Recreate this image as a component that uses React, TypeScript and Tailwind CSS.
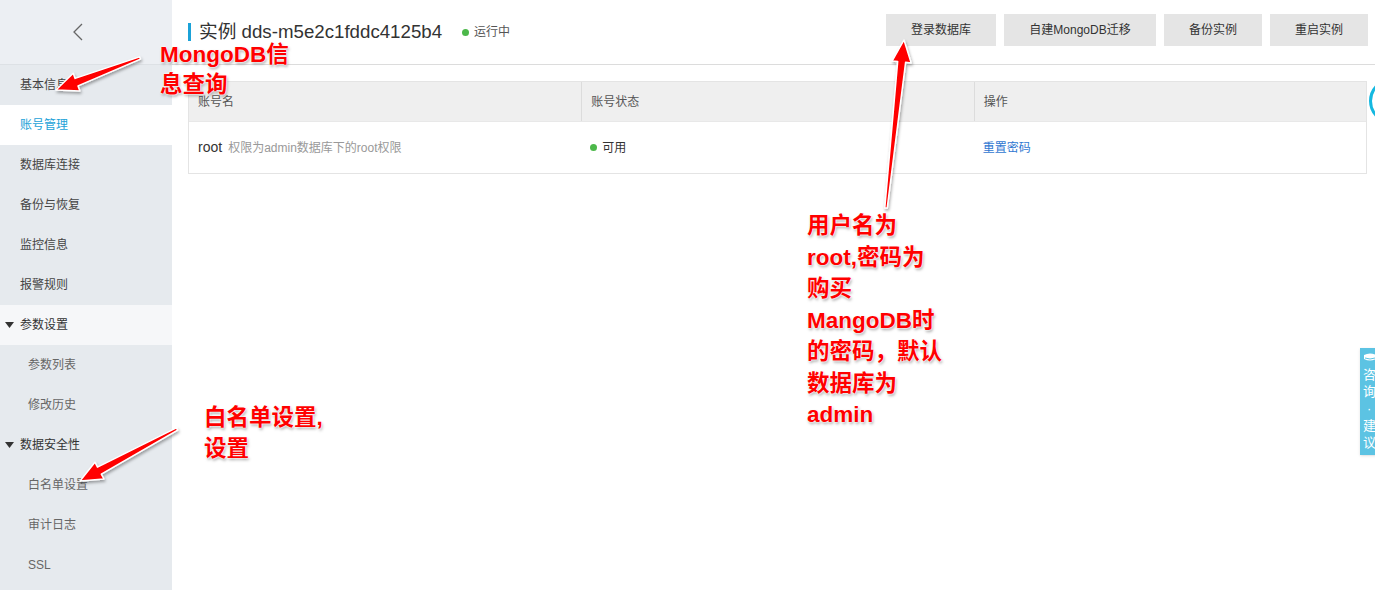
import React from "react";

const font = "font-['Liberation_Sans','Noto_Sans_CJK_SC',sans-serif]";

type Item = { label: string; kind: "item" | "active" | "group" | "sub"; light?: boolean };

const menu: Item[] = [
  { label: "基本信息", kind: "item" },
  { label: "账号管理", kind: "active" },
  { label: "数据库连接", kind: "item" },
  { label: "备份与恢复", kind: "item" },
  { label: "监控信息", kind: "item" },
  { label: "报警规则", kind: "item" },
  { label: "参数设置", kind: "group", light: true },
  { label: "参数列表", kind: "sub" },
  { label: "修改历史", kind: "sub" },
  { label: "数据安全性", kind: "group" },
  { label: "白名单设置", kind: "sub" },
  { label: "审计日志", kind: "sub" },
  { label: "SSL", kind: "sub" },
];

function arrowPoints(tx: number, ty: number, hx: number, hy: number) {
  const dx = hx - tx;
  const dy = hy - ty;
  const len = Math.hypot(dx, dy);
  const ux = dx / len;
  const uy = dy / len;
  const nx = -uy;
  const ny = ux;
  const headLen = 22;
  const bx = hx - ux * headLen;
  const by = hy - uy * headLen;
  const p = (x: number, y: number) => `${x.toFixed(1)},${y.toFixed(1)}`;
  return [
    p(tx + nx * 1.2, ty + ny * 1.2),
    p(bx + nx * 4, by + ny * 4),
    p(bx + nx * 9.5, by + ny * 9.5),
    p(hx, hy),
    p(bx - nx * 9.5, by - ny * 9.5),
    p(bx - nx * 4, by - ny * 4),
    p(tx - nx * 1.2, ty - ny * 1.2),
  ].join(" ");
}

function Arrows() {
  const arrows = [
    [140, 58, 56, 90],
    [177, 429, 80, 481],
    [886, 208, 904, 40],
  ];
  return (
    <svg className="pointer-events-none absolute left-0 top-0" width="1375" height="590">
      <defs>
        <filter id="sh" x="-20%" y="-20%" width="140%" height="140%">
          <feDropShadow dx="1" dy="2" stdDeviation="1.5" floodColor="#000" floodOpacity="0.35" />
        </filter>
      </defs>
      {arrows.map(([a, b, c, d], i) => (
        <polygon
          key={i}
          points={arrowPoints(a, b, c, d)}
          fill="#ff0000"
          stroke="#ffffff"
          strokeWidth="1.5"
          strokeLinejoin="round"
          filter="url(#sh)"
        />
      ))}
    </svg>
  );
}

const note =
  "absolute text-[22.5px] font-bold text-[#ff0000] [text-shadow:0_0_1px_#fff,0_0_2px_#fff,0_0_2px_#fff,1px_2px_3px_rgba(0,0,0,0.35)]";

export default function App() {
  return (
    <div className={`relative flex h-[590px] w-[1375px] overflow-hidden bg-white ${font}`}>
      <aside className="flex w-[172px] shrink-0 flex-col bg-[#e6eaee]">
        <div className="flex h-[65px] items-center justify-center border-b border-[#dde1e5] bg-[#eceff3]">
          <svg width="12" height="20" viewBox="0 0 12 20" className="mr-[16px]">
            <polyline points="10,2 2,10 10,18" fill="none" stroke="#666" strokeWidth="1.3" />
          </svg>
        </div>
        {menu.map((m) => (
          <div
            key={m.label}
            className={`flex h-10 items-center text-[12px] ${
              m.kind === "active"
                ? "bg-white pl-5 text-[#1ba2d8]"
                : m.kind === "group"
                ? `${m.light ? "bg-[#f6f7f9]" : ""} pl-[5px] text-[#333]`
                : m.kind === "sub"
                ? "pl-[28px] text-[#666]"
                : "pl-5 text-[#444]"
            }`}
          >
            {m.kind === "group" && (
              <svg width="9" height="6" viewBox="0 0 9 6" className="mr-[6px]">
                <polygon points="0,0 9,0 4.5,6" fill="#333" />
              </svg>
            )}
            {m.label}
          </div>
        ))}
      </aside>

      <main className="flex flex-1 flex-col">
        <header className="flex h-[65px] items-start border-b border-[#dcdcdc] pl-4 pr-[7px]">
          <div className="mt-[22px] flex items-center">
            <span className="h-[18px] w-[3px] bg-[#1ba2d8]" />
            <span className="ml-2 text-[18.7px] leading-[20px] text-[#333]">实例 dds-m5e2c1fddc4125b4</span>
            <span className="ml-5 flex items-center text-[12px] text-[#555]">
              <span className="mr-[5px] h-[7px] w-[7px] rounded-full bg-[#4cb84a]" />
              运行中
            </span>
          </div>
          <div className="ml-auto mt-[14px] flex gap-2 text-[12px] text-[#333]">
            <button className="h-8 w-[110px] bg-[#e5e5e5]">登录数据库</button>
            <button className="h-8 w-[152px] bg-[#e5e5e5]">自建MongoDB迁移</button>
            <button className="h-8 w-[98px] bg-[#e5e5e5]">备份实例</button>
            <button className="h-8 w-[98px] bg-[#e5e5e5]">重启实例</button>
          </div>
        </header>

        <div className="ml-4 mr-2 mt-4 border border-[#e4e4e4]">
          <div className="grid h-[39px] grid-cols-3 bg-[#efefef] text-[12px] text-[#555]">
            <div className="flex items-center pl-[9px]">账号名</div>
            <div className="flex items-center border-l border-[#dcdcdc] pl-[9px]">账号状态</div>
            <div className="flex items-center border-l border-[#dcdcdc] pl-[9px]">操作</div>
          </div>
          <div className="grid h-[52px] grid-cols-3 border-t border-[#e8e8e8] text-[12px]">
            <div className="flex items-center pl-[9px]">
              <span className="text-[14px] text-[#333]">root</span>
              <span className="ml-[6px] text-[#999]">权限为admin数据库下的root权限</span>
            </div>
            <div className="flex items-center pl-[9px] text-[#333]">
              <span className="mr-[5px] h-[7px] w-[7px] rounded-full bg-[#4cb84a]" />
              可用
            </div>
            <div className="flex items-center pl-[9px] text-[#2f77d1]">重置密码</div>
          </div>
        </div>
      </main>

      <div className="absolute left-[1369px] top-[78px] h-[46px] w-[46px] rounded-full border-[3px] border-[#14b8e0] bg-white" />

      <div className="absolute left-[1360px] top-[348px] flex h-[107px] w-[30px] flex-col items-start bg-[#5cc3e3] pl-[3px] pt-[4px] text-[13px] leading-[17px] text-white shadow">
        <svg width="14" height="10" viewBox="0 0 14 10">
          <path d="M1 3 Q7 0 13 3 L13 7 Q7 10 1 7 Z" fill="#fff" />
          <path d="M2 6 Q7 8 12 6" stroke="#5cc3e3" strokeWidth="1" fill="none" />
        </svg>
        <span className="mt-[4px]">咨</span>
        <span>询</span>
        <span className="pl-[4px]">·</span>
        <span>建</span>
        <span>议</span>
      </div>

      <Arrows />

      <div className={`${note} left-[160px] top-[40px] leading-[30px]`}>
        MongoDB信
        <br />
        息查询
      </div>
      <div className={`${note} left-[204px] top-[402px] leading-[31px]`}>
        白名单设置,
        <br />
        设置
      </div>
      <div className={`${note} left-[807px] top-[210px] leading-[31.5px]`}>
        用户名为
        <br />
        root,密码为
        <br />
        购买
        <br />
        MangoDB时
        <br />
        的密码，默认
        <br />
        数据库为
        <br />
        admin
      </div>
    </div>
  );
}
